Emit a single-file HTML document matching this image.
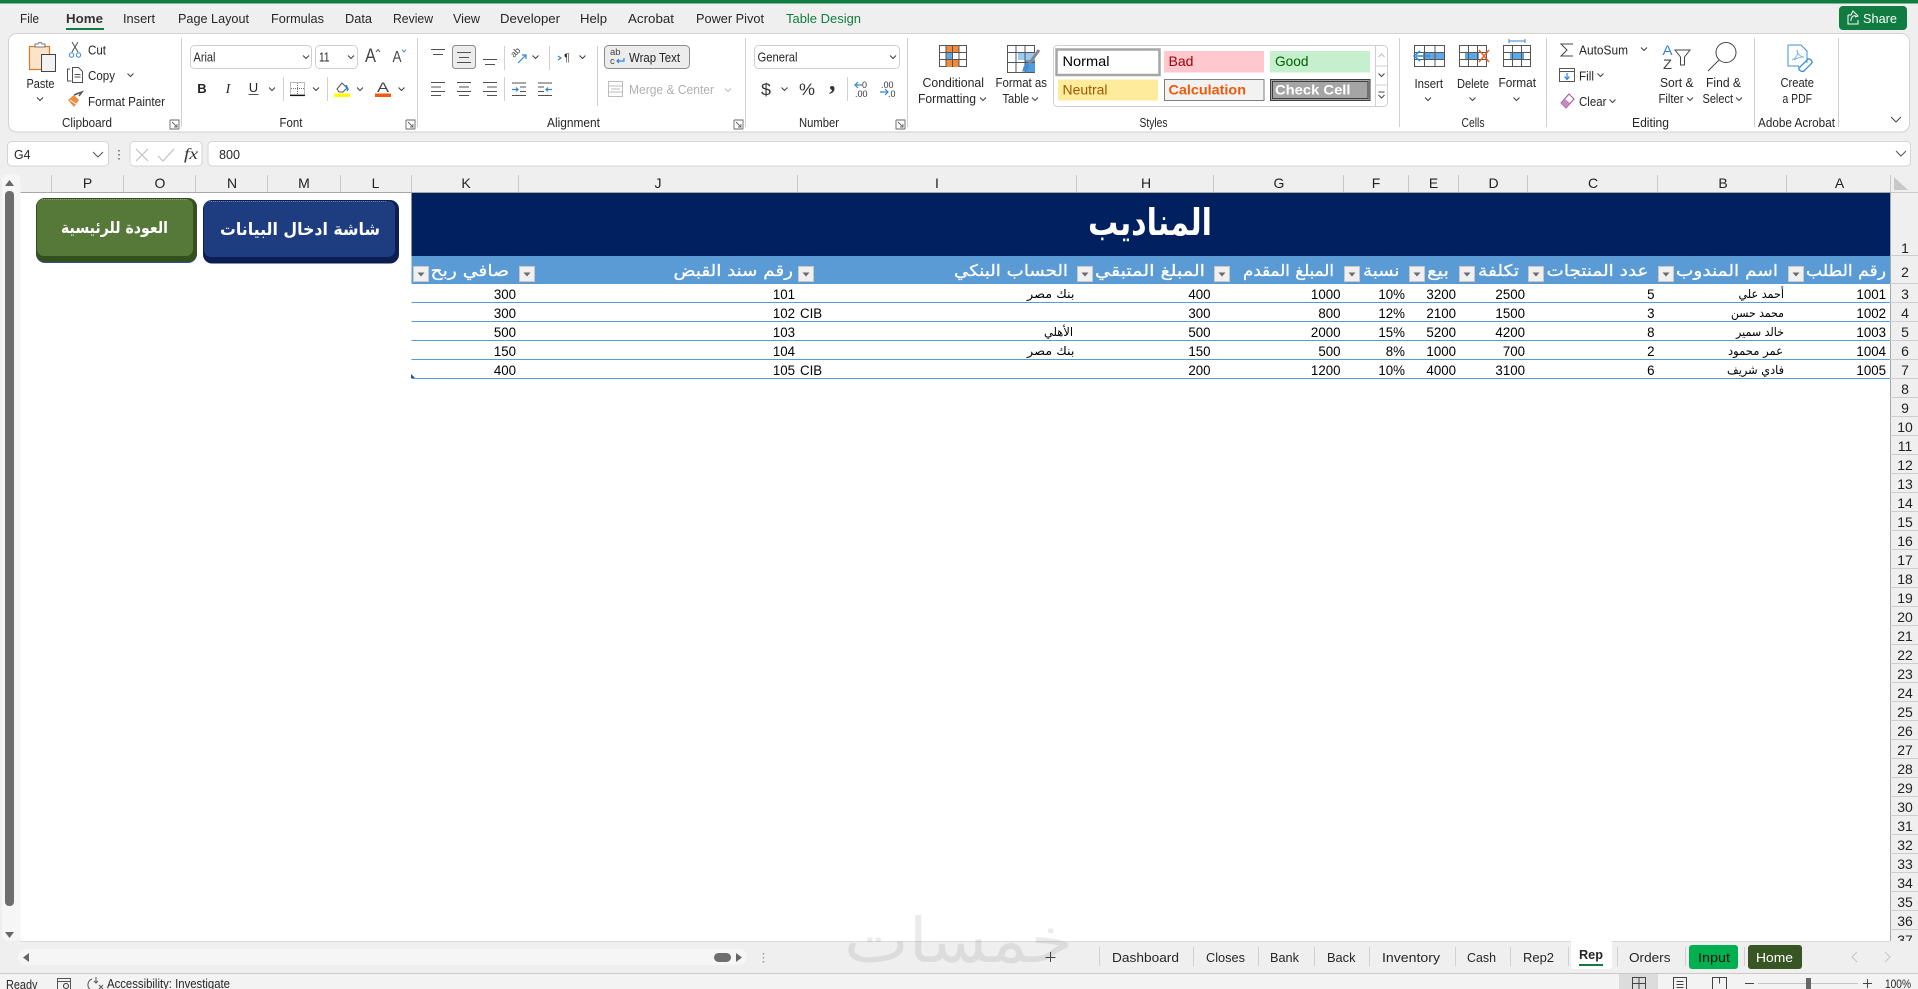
<!DOCTYPE html>
<html lang="en"><head><meta charset="utf-8"><title>Excel</title>
<style>
html,body{margin:0;padding:0;background:#efefef;width:1918px;height:989px;overflow:hidden}
svg{display:block}
text{font-family:"Liberation Sans","DejaVu Sans",sans-serif;fill:#262626;font-size:12.5px}
.t{font-size:13px}
.c{font-size:14px;fill:#000}
.h{font-size:14px;fill:#222;text-anchor:middle}
.a{font-family:"DejaVu Sans",sans-serif}
.hd{font-family:"DejaVu Sans",sans-serif;font-size:16px;fill:#fff;stroke:#fff;stroke-width:.25}
.n{font-family:"DejaVu Sans",sans-serif;font-size:12px;fill:#000}
.i{fill:none;stroke:#505050;stroke-width:1}
.b{fill:none;stroke:#2f86d8;stroke-width:1.2}
.sep{stroke:#d0d0d0;stroke-width:1}
</style></head><body>
<svg width="1918" height="989" viewBox="0 0 1918 989" xmlns="http://www.w3.org/2000/svg">
<defs>
<path id="ch" d="M-3 -1.5L0 1.5L3 -1.5" fill="none" stroke="#444" stroke-width="1.1"/>
<g id="fb"><rect x=".5" y=".5" width="15" height="15" fill="#f0f0f0" stroke="#c8c8c8"/><path d="M4.5 6.500h7l-3.500 4z" fill="#6a6a6a"/></g>
<path id="dl" d="M0 0h9v9M0 0v9h9M2 2l5 5M7 4v3H4" fill="none" stroke="#666" stroke-width=".9"/>
</defs>
<rect width="1918" height="989" fill="#efefef"/>
<rect width="1918" height="3.5" fill="#107c41"/>

<!-- menu tabs -->
<g class="menu">
<text class="t" x="20" y="23" textLength="19" lengthAdjust="spacingAndGlyphs">File</text>
<text class="t" x="66" y="23" textLength="37" lengthAdjust="spacingAndGlyphs" style="font-weight:700;stroke:none;fill:#333">Home</text>
<text class="t" x="123" y="23" textLength="32" lengthAdjust="spacingAndGlyphs">Insert</text>
<text class="t" x="178" y="23" textLength="71" lengthAdjust="spacingAndGlyphs">Page Layout</text>
<text class="t" x="271" y="23" textLength="53" lengthAdjust="spacingAndGlyphs">Formulas</text>
<text class="t" x="345" y="23" textLength="27" lengthAdjust="spacingAndGlyphs">Data</text>
<text class="t" x="393" y="23" textLength="40" lengthAdjust="spacingAndGlyphs">Review</text>
<text class="t" x="453" y="23" textLength="27" lengthAdjust="spacingAndGlyphs">View</text>
<text class="t" x="500" y="23" textLength="60" lengthAdjust="spacingAndGlyphs">Developer</text>
<text class="t" x="580" y="23" textLength="27" lengthAdjust="spacingAndGlyphs">Help</text>
<text class="t" x="628" y="23" textLength="46" lengthAdjust="spacingAndGlyphs">Acrobat</text>
<text class="t" x="696" y="23" textLength="68" lengthAdjust="spacingAndGlyphs">Power Pivot</text>
<text class="t" x="786" y="23" textLength="75" lengthAdjust="spacingAndGlyphs" style="fill:#107c41">Table Design</text>
</g>
<rect x="66" y="28" width="38" height="2" fill="#107c41"/>
<rect x="1839" y="6" width="68" height="24" rx="4" fill="#107c41"/>
<path d="M1848 15h3l2-4 5 5-3 1M1848 15v9h10v-4M1851 21c0-4 2-6 5-5" fill="none" stroke="#fff"/>
<text class="t" x="1863" y="23" textLength="34" lengthAdjust="spacingAndGlyphs" style="fill:#fff">Share</text>

<!-- ribbon -->
<rect x="8.5" y="33.5" width="1901" height="98.5" rx="8" fill="#fff" stroke="#d2d2d2"/>
<g class="sep"><path d="M181.5 38v89M417.5 38v89M745.5 38v89M907.5 38v89M1399.5 38v89M1546.5 38v89M1754.5 38v89M1838.5 38v89M597.5 46v60M283.5 77v24M327.5 77v24M504.5 46v24M504.5 77v24M549.5 46v24M847.5 77v24" fill="none"/></g>
<!-- group labels -->
<text x="62" y="127" textLength="50" lengthAdjust="spacingAndGlyphs">Clipboard</text>
<text x="279.5" y="127" textLength="23" lengthAdjust="spacingAndGlyphs">Font</text>
<text x="547" y="127" textLength="53" lengthAdjust="spacingAndGlyphs">Alignment</text>
<text x="799" y="127" textLength="40" lengthAdjust="spacingAndGlyphs">Number</text>
<text x="1139.5" y="127" textLength="28" lengthAdjust="spacingAndGlyphs">Styles</text>
<text x="1461.5" y="127" textLength="23" lengthAdjust="spacingAndGlyphs">Cells</text>
<text x="1632" y="127" textLength="37" lengthAdjust="spacingAndGlyphs">Editing</text>
<text x="1758" y="127" textLength="77" lengthAdjust="spacingAndGlyphs">Adobe Acrobat</text>
<use href="#dl" x="170" y="120"/><use href="#dl" x="406" y="120"/><use href="#dl" x="734" y="120"/><use href="#dl" x="896" y="120"/>

<!-- clipboard -->
<rect x="29.5" y="46.5" width="20" height="23" fill="#fde4c8" stroke="#d9772b" stroke-width="1.2"/>
<path d="M35 46v-2h3l1-1.5h2l1 1.5h3v3h-10z" fill="#fff" stroke="#777"/>
<rect x="41.5" y="54.5" width="14" height="17" fill="#f2f2f2" stroke="#444"/>
<text x="26.5" y="88" textLength="28" lengthAdjust="spacingAndGlyphs">Paste</text>
<use href="#ch" x="40" y="99"/>
<path d="M72 42l6 10M78 42l-6 10" class="i" stroke="#555"/><circle cx="71.5" cy="55" r="2.2" fill="none" stroke="#2f86d8"/><circle cx="78.5" cy="55" r="2.2" fill="none" stroke="#2f86d8"/>
<text x="88" y="54.5" textLength="18" lengthAdjust="spacingAndGlyphs">Cut</text>
<path d="M70 69h-2.500v12h4M72.500 67.500h6l4 4v11h-10z" class="i"/><path d="M74.500 74.500h6M74.500 77h6" class="i"/>
<text x="88" y="80" textLength="27" lengthAdjust="spacingAndGlyphs">Copy</text>
<use href="#ch" x="130.500" y="75"/>
<path d="M68 100l6-5 5 5-5 7z" fill="#f08a3c"/><path d="M74 95l5-2 3-1-3 4" fill="none" stroke="#555" stroke-width="1.500"/><path d="M70 100l6 4" stroke="#fff"/>
<text x="88" y="106" textLength="77" lengthAdjust="spacingAndGlyphs">Format Painter</text>

<!-- font -->
<rect x="190.500" y="45.500" width="121" height="23" rx="4" fill="#fff" stroke="#cfcfcf"/>
<text x="193.500" y="61.500" textLength="22" lengthAdjust="spacingAndGlyphs">Arial</text>
<use href="#ch" x="306" y="57"/>
<rect x="315.500" y="45.500" width="42" height="23" rx="4" fill="#fff" stroke="#cfcfcf"/>
<text x="319" y="61.500" textLength="10.500" lengthAdjust="spacingAndGlyphs">11</text>
<use href="#ch" x="351" y="57"/>
<text x="365" y="62" style="font-size:19px;fill:#444" textLength="11" lengthAdjust="spacingAndGlyphs">A</text><path d="M376 52l2-2.500 2 2.500" class="i"/>
<text x="392.500" y="62" style="font-size:16px;fill:#444" textLength="9" lengthAdjust="spacingAndGlyphs">A</text><path d="M402 49.500l2 2.500 2-2.500" fill="none" stroke="#2f86d8"/>
<text x="202" y="93" text-anchor="middle" style="font-weight:700;font-size:13px">B</text>
<text x="228" y="93" text-anchor="middle" style="font-style:italic;font-family:'Liberation Serif',serif;font-size:14px">I</text>
<text x="253.500" y="92" text-anchor="middle" style="font-size:13px">U</text><path d="M248.500 94.500h10" class="i"/>
<use href="#ch" x="272" y="89"/>
<rect x="290.500" y="82.500" width="14" height="12" fill="none" stroke="#777" stroke-dasharray="1 1"/><path d="M297.500 83v12M291 88.500h14" stroke="#777" stroke-dasharray="1 1"/><path d="M290 95.500h15" stroke="#111" stroke-width="1.200"/>
<use href="#ch" x="316" y="89"/>
<path d="M337 89l5-6 5 5-4 4h-4z" fill="none" stroke="#555"/><path d="M346 85l2 4-1 2" fill="none" stroke="#2f86d8" stroke-width="1.500"/><rect x="334" y="93.500" width="16" height="3.500" fill="#ffff00"/>
<use href="#ch" x="360" y="89"/>
<text x="377" y="92" style="font-size:14px;fill:#444" textLength="12" lengthAdjust="spacingAndGlyphs">A</text><rect x="375" y="93.500" width="16" height="3.500" fill="#f05a12"/>
<use href="#ch" x="401.500" y="89"/>

<!-- alignment -->
<path d="M431 49.500h14M433 54.500h10" class="i"/>
<rect x="452.500" y="45.500" width="23" height="23" rx="3" fill="#ececec" stroke="#8c8c8c"/>
<path d="M457 52.500h14M459 57.500h10M457 62.500h14" class="i"/>
<path d="M483 59.500h14M485 64.500h10" class="i"/>
<text x="514" y="58" style="font-size:9px;fill:#444" transform="rotate(-45 514 58)">ab</text><path d="M518 63l8-8M522 55h4v4" class="b"/>
<use href="#ch" x="535.500" y="57"/>
<path d="M558 56l3 2-3 2" class="b"/><text x="564" y="61" style="font-size:11px;fill:#333">¶</text>
<use href="#ch" x="582.500" y="57"/>
<rect x="604.500" y="45.500" width="85" height="23" rx="4" fill="#ececec" stroke="#8c8c8c"/>
<text x="610" y="55" style="font-size:9.500px;fill:#444">ab</text><text x="610" y="64" style="font-size:9.500px;fill:#444">c</text><path d="M624 58v3h-7M619 59l-2 2 2 2" class="b"/>
<text x="629" y="62" textLength="51" lengthAdjust="spacingAndGlyphs">Wrap Text</text>
<path d="M431 82.500h14M431 87h10M431 91.500h14M431 95.500h10" class="i"/>
<path d="M457 82.500h14M459 87h10M457 91.500h14M459 95.500h10" class="i"/>
<path d="M483 82.500h14M487 87h10M483 91.500h14M487 95.500h10" class="i"/>
<path d="M512 83h14M520 87h6M520 91.500h6M512 95.500h14" class="i"/><path d="M512 89.500h6M516 87.500l2 2-2 2" class="b"/>
<path d="M538 83h14M538 87h6M538 91.500h6M538 95.500h14" class="i"/><path d="M546 89.500h6M548 87.500l-2 2 2 2" class="b"/>
<rect x="608.500" y="81.500" width="14" height="15" fill="none" stroke="#bdbdbd"/><path d="M609 86h13M609 92h13M611 89h9" stroke="#bdbdbd"/>
<text x="629" y="94" textLength="85" lengthAdjust="spacingAndGlyphs" style="fill:#b0b0b0">Merge &amp; Center</text>
<path d="M725 88.500l3 3 3-3" fill="none" stroke="#bbb"/>

<!-- number -->
<rect x="754.500" y="45.500" width="145" height="23" rx="4" fill="#fff" stroke="#cfcfcf"/>
<text x="757.500" y="61.500" textLength="40" lengthAdjust="spacingAndGlyphs">General</text>
<use href="#ch" x="893" y="57"/>
<text x="761" y="95" style="font-size:17px;fill:#333" textLength="10" lengthAdjust="spacingAndGlyphs">$</text>
<use href="#ch" x="784.500" y="89"/>
<text x="799" y="95" style="font-size:17px;fill:#333" textLength="16" lengthAdjust="spacingAndGlyphs">%</text>
<text x="829" y="90" style="font-size:26px;font-weight:700;fill:#333;font-family:'Liberation Serif',serif">,</text>
<path d="M862 85h-7M858 82l-3 3 3 3" class="b"/><text x="862" y="88" style="font-size:9px;fill:#333">0</text><text x="855" y="97" style="font-size:9px;fill:#333">.00</text>
<text x="881" y="88" style="font-size:9px;fill:#333">.00</text><path d="M880 92h8M885 89l3 3-3 3" class="b"/><text x="888" y="97" style="font-size:9px;fill:#333">.0</text>

<!-- conditional formatting / format as table -->
<rect x="939.500" y="45.500" width="27" height="21" fill="#fff" stroke="#555"/>
<rect x="946" y="46" width="13" height="7" fill="#f28a3a"/><rect x="946" y="53" width="6.500" height="7" fill="#5ea8e6"/><rect x="946" y="60" width="13" height="7" fill="#f28a3a"/>
<path d="M946 45v22M952.500 45v22M959 45v22M939.500 52.500h27M939.500 59.500h27" fill="none" stroke="#555"/>
<text x="922.500" y="87" textLength="61.500" lengthAdjust="spacingAndGlyphs">Conditional</text>
<text x="918" y="103" textLength="58" lengthAdjust="spacingAndGlyphs">Formatting</text><use href="#ch" x="983" y="99"/>
<rect x="1007.500" y="45.500" width="27" height="27" fill="#fff" stroke="#555"/>
<rect x="1018" y="52" width="17" height="8" fill="#9cc9ef"/><rect x="1025" y="60" width="10" height="12" fill="#4f9de0"/>
<path d="M1016 45v27M1025 45v27M1008 52.500h27M1008 62.500h27" fill="none" stroke="#555"/>
<path d="M1039 50l-10 14" stroke="#888" stroke-width="3"/><path d="M1027 64c3 1 3 4 0 6l-5 2c1-2 1-5 2-6z" fill="#3d8fd6"/>
<text x="995.500" y="87" textLength="51.500" lengthAdjust="spacingAndGlyphs">Format as</text>
<text x="1002.500" y="103" textLength="26.500" lengthAdjust="spacingAndGlyphs">Table</text><use href="#ch" x="1035" y="99"/>

<!-- styles gallery -->
<rect x="1053.500" y="45.500" width="334" height="61" rx="4" fill="#fff" stroke="#cfcfcf"/>
<path d="M1375.500 45.500v61M1375.500 66h12M1375.500 85h12" stroke="#cfcfcf" fill="none"/>
<path d="M1378.500 57l3-3 3 3" fill="none" stroke="#bbb"/><use href="#ch" x="1381.500" y="75"/><path d="M1378.500 92h6M1378.500 95l3 3 3-3" fill="none" stroke="#444"/>
<rect x="1056.500" y="49.500" width="103" height="25.500" fill="#fff" stroke="#a6a6a6" stroke-width="2.500"/>
<text x="1062.500" y="66" style="font-size:14px;fill:#000" textLength="47" lengthAdjust="spacingAndGlyphs">Normal</text>
<rect x="1164" y="51" width="100" height="21.500" fill="#ffc7ce"/>
<text x="1168.500" y="66" style="font-size:14px;fill:#9c0006" textLength="25" lengthAdjust="spacingAndGlyphs">Bad</text>
<rect x="1270" y="51" width="100" height="21.500" fill="#c6efce"/>
<text x="1275" y="66" style="font-size:14px;fill:#006100" textLength="33.500" lengthAdjust="spacingAndGlyphs">Good</text>
<rect x="1058" y="79.500" width="100" height="21" fill="#ffeb9c"/>
<text x="1062.500" y="94.500" style="font-size:14px;fill:#9c5700" textLength="45" lengthAdjust="spacingAndGlyphs">Neutral</text>
<rect x="1164.500" y="79.500" width="99.500" height="21" fill="#f2f2f2" stroke="#7f7f7f"/>
<text x="1168.500" y="94.500" style="font-size:14px;font-weight:700;fill:#ee5a0a" textLength="77.500" lengthAdjust="spacingAndGlyphs">Calculation</text>
<rect x="1270.500" y="79.500" width="99.500" height="21" fill="#a5a5a5" stroke="#3f3f3f"/><rect x="1272.500" y="81.500" width="95.500" height="17" fill="none" stroke="#3f3f3f"/>
<text x="1275" y="94.500" style="font-size:14px;font-weight:700;fill:#fff" textLength="75.500" lengthAdjust="spacingAndGlyphs">Check Cell</text>

<!-- cells -->
<rect x="1414.500" y="45.500" width="30" height="21" fill="#fff" stroke="#555"/><rect x="1423" y="52" width="21" height="8" fill="#5ea8e6"/>
<path d="M1424.500 45.500v21M1435 45.500v21M1414.500 52.500h30M1414.500 59.500h30" stroke="#555" fill="none"/><path d="M1430 56h-14M1420 51l-6 5 6 5" fill="none" stroke="#2f86d8" stroke-width="1.500"/>
<text x="1414.500" y="88" textLength="28.500" lengthAdjust="spacingAndGlyphs">Insert</text><use href="#ch" x="1428" y="99"/>
<rect x="1459.500" y="45.500" width="27" height="21" fill="#fff" stroke="#555"/><rect x="1465" y="52" width="14" height="8" fill="#5ea8e6"/>
<path d="M1468.500 45.500v21M1477.500 45.500v21M1459.500 52.500h27M1459.500 59.500h27" stroke="#555" fill="none"/><path d="M1479 50l10 12M1489 50l-10 12" stroke="#ee5a24" stroke-width="1.400" fill="none"/>
<text x="1457" y="88" textLength="32" lengthAdjust="spacingAndGlyphs">Delete</text><use href="#ch" x="1472.500" y="99"/>
<rect x="1503.500" y="45.500" width="27" height="21" fill="#fff" stroke="#555"/><rect x="1510" y="52" width="14" height="8" fill="#5ea8e6"/>
<path d="M1512.500 45.500v21M1521.500 45.500v21M1503.500 52.500h27M1503.500 59.500h27" stroke="#555" fill="none"/><path d="M1509 41h16M1509 39v4M1525 39v4" stroke="#2f86d8" fill="none"/>
<text x="1498.500" y="87" textLength="37.500" lengthAdjust="spacingAndGlyphs">Format</text><use href="#ch" x="1516.500" y="99"/>

<!-- editing -->
<path d="M1573 44h-12l6 6-6 6h12" fill="none" stroke="#444"/>
<text x="1579" y="54.500" textLength="49" lengthAdjust="spacingAndGlyphs">AutoSum</text><use href="#ch" x="1644" y="49"/>
<rect x="1559.500" y="68.500" width="15" height="13" fill="none" stroke="#555"/><path d="M1560 71.500h14" stroke="#555"/><path d="M1567 73v6M1564.500 76.500l2.500 3 2.500-3" class="b"/>
<text x="1579" y="80.500" textLength="15" lengthAdjust="spacingAndGlyphs">Fill</text><use href="#ch" x="1600.500" y="75"/>
<path d="M1561 103l8-9 5 5-8 9z" fill="#fff" stroke="#a54ca0"/><path d="M1561 103l4-4 5 4-4 5z" fill="#c58ac2"/>
<text x="1579" y="106" textLength="27.500" lengthAdjust="spacingAndGlyphs">Clear</text><use href="#ch" x="1612.500" y="101"/>
<text x="1662.500" y="55" style="font-size:14px;fill:#2f86d8" textLength="10" lengthAdjust="spacingAndGlyphs">A</text>
<text x="1663" y="69" style="font-size:14px;fill:#444" textLength="9" lengthAdjust="spacingAndGlyphs">Z</text>
<path d="M1675 50h15l-5.500 7v8h-4v-8z" fill="none" stroke="#444"/>
<text x="1660" y="87" textLength="33.500" lengthAdjust="spacingAndGlyphs">Sort &amp;</text>
<text x="1658.500" y="103" textLength="25" lengthAdjust="spacingAndGlyphs">Filter</text><use href="#ch" x="1690" y="99"/>
<circle cx="1726" cy="52.500" r="10" fill="#fff" stroke="#444"/><path d="M1719 60l-11 11" stroke="#444"/>
<text x="1706" y="87" textLength="35" lengthAdjust="spacingAndGlyphs">Find &amp;</text>
<text x="1702.500" y="103" textLength="30.500" lengthAdjust="spacingAndGlyphs">Select</text><use href="#ch" x="1739" y="99"/>

<!-- acrobat -->
<path d="M1788 45h13l6 6v12M1788 45v21h11" fill="none" stroke="#3d8fd6"/><path d="M1792 60c4-2 7-6 5-10 0 4 4 7 7 7-3 0-7 1-10 3" fill="none" stroke="#7fb3e6"/>
<path d="M1800 67l8-8a3.500 3.500 0 0 1 4 4l-8 8a3.500 3.500 0 0 1-5-4z" fill="none" stroke="#3d8fd6" stroke-width="1.300"/>
<text x="1780.500" y="87" textLength="33.500" lengthAdjust="spacingAndGlyphs">Create</text>
<text x="1782.500" y="103" textLength="29.500" lengthAdjust="spacingAndGlyphs">a PDF</text>
<path d="M1891 117l5 5 5-5" fill="none" stroke="#444"/>

<!-- formula bar -->
<rect x="7.500" y="141.500" width="101" height="24.500" rx="4" fill="#fff" stroke="#d4d4d4"/>
<text x="14" y="159" style="font-size:13px" textLength="16.500" lengthAdjust="spacingAndGlyphs">G4</text>
<path d="M93 152l5 5 5-5" fill="none" stroke="#555"/>
<path d="M119 150v1.500M119 154v1.500M119 158v1.500" stroke="#888" stroke-width="2"/>
<rect x="130" y="141.500" width="72" height="24.500" rx="4" fill="#fff" stroke="#d4d4d4"/>
<path d="M136 149l12 12M148 149l-12 12M158 156l5 5 11-12" fill="none" stroke="#c2c2c2" stroke-width="1.200"/>
<text x="184" y="159" style="font-family:'Liberation Serif',serif;font-style:italic;font-size:15.500px;fill:#333" textLength="14" lengthAdjust="spacingAndGlyphs">fx</text>
<rect x="208" y="141.500" width="1702.500" height="24.500" rx="4" fill="#fff" stroke="#d4d4d4"/>
<text x="219" y="159" style="font-size:13px" textLength="21" lengthAdjust="spacingAndGlyphs">800</text>
<path d="M1896 151l5 5 5-5" fill="none" stroke="#555"/>

<!-- sheet -->
<rect x="20.500" y="174" width="1898" height="767" fill="#fff"/>
<rect x="20.500" y="174" width="1898" height="18.700" fill="#efefef"/>
<path d="M20.500 192.500H1918" stroke="#a8a8a8"/>
<g stroke="#c8c8c8"><path d="M51.500 175v17M123.500 175v17M195.500 175v17M267.500 175v17M340.500 175v17M411.500 175v17M518.500 175v17M797.500 175v17M1076.500 175v17M1213.500 175v17M1343.500 175v17M1408.500 175v17M1458.500 175v17M1527.500 175v17M1657.500 175v17M1786.500 175v17M1890.500 175v17" fill="none"/></g>
<path d="M1894 190h14l-14-13z" fill="#c8c8c8"/>
<g>
<text class="h" x="87.500" y="188">P</text><text class="h" x="160" y="188">O</text><text class="h" x="232" y="188">N</text><text class="h" x="304" y="188">M</text><text class="h" x="375.500" y="188">L</text><text class="h" x="466" y="188">K</text><text class="h" x="658" y="188">J</text><text class="h" x="937" y="188">I</text><text class="h" x="1146" y="188">H</text><text class="h" x="1279" y="188">G</text><text class="h" x="1376" y="188">F</text><text class="h" x="1433.500" y="188">E</text><text class="h" x="1493.500" y="188">D</text><text class="h" x="1593" y="188">C</text><text class="h" x="1723" y="188">B</text><text class="h" x="1839.500" y="188">A</text>
</g>

<!-- row header -->
<rect x="1890" y="192.500" width="28" height="749" fill="#efefef"/>
<path d="M1890.500 192.500V941" stroke="#a8a8a8"/>
<g stroke="#cdcdcd"><path d="M1890 255.500h28M1890 283.500h28M1890 302.500h28M1890 321.500h28M1890 340.500h28M1890 359.500h28M1890 378.500h28M1890 397.500h28M1890 416.500h28M1890 435.500h28M1890 454.500h28M1890 473.500h28M1890 492.500h28M1890 511.500h28M1890 530.500h28M1890 549.500h28M1890 568.500h28M1890 587.500h28M1890 606.500h28M1890 625.500h28M1890 644.500h28M1890 663.500h28M1890 682.500h28M1890 701.500h28M1890 720.500h28M1890 739.500h28M1890 758.500h28M1890 777.500h28M1890 796.500h28M1890 815.500h28M1890 834.500h28M1890 853.500h28M1890 872.500h28M1890 891.500h28M1890 910.500h28M1890 929.500h28" fill="none"/></g>
<g>
<text class="h" x="1905" y="253">1</text><text class="h" x="1905" y="277">2</text><text class="h" x="1905" y="299">3</text><text class="h" x="1905" y="318">4</text><text class="h" x="1905" y="337">5</text><text class="h" x="1905" y="356">6</text><text class="h" x="1905" y="375">7</text><text class="h" x="1905" y="394">8</text><text class="h" x="1905" y="413">9</text><text class="h" x="1905" y="432">10</text><text class="h" x="1905" y="451">11</text><text class="h" x="1905" y="470">12</text><text class="h" x="1905" y="489">13</text><text class="h" x="1905" y="508">14</text><text class="h" x="1905" y="527">15</text><text class="h" x="1905" y="546">16</text><text class="h" x="1905" y="565">17</text><text class="h" x="1905" y="584">18</text><text class="h" x="1905" y="603">19</text><text class="h" x="1905" y="622">20</text><text class="h" x="1905" y="641">21</text><text class="h" x="1905" y="660">22</text><text class="h" x="1905" y="679">23</text><text class="h" x="1905" y="698">24</text><text class="h" x="1905" y="717">25</text><text class="h" x="1905" y="736">26</text><text class="h" x="1905" y="755">27</text><text class="h" x="1905" y="774">28</text><text class="h" x="1905" y="793">29</text><text class="h" x="1905" y="812">30</text><text class="h" x="1905" y="831">31</text><text class="h" x="1905" y="850">32</text><text class="h" x="1905" y="869">33</text><text class="h" x="1905" y="888">34</text><text class="h" x="1905" y="907">35</text><text class="h" x="1905" y="926">36</text><text class="h" x="1905" y="945">37</text>
</g>

<!-- title + header -->
<rect x="411.500" y="193" width="1478.500" height="63" fill="#002060"/>
<rect x="411.500" y="256" width="1478.500" height="28" fill="#5b9bd5"/>
<text class="a" x="1088" y="235" textLength="124" lengthAdjust="spacingAndGlyphs" style="font-size:37px;font-weight:700;fill:#fff">المناديب</text>

<text class="hd" x="1806" y="276" textLength="80" lengthAdjust="spacingAndGlyphs">رقم الطلب</text>
<text class="hd" x="1676" y="276" textLength="102" lengthAdjust="spacingAndGlyphs">اسم المندوب</text>
<text class="hd" x="1546.500" y="276" textLength="102" lengthAdjust="spacingAndGlyphs">عدد المنتجات</text>
<text class="hd" x="1478" y="276" textLength="41" lengthAdjust="spacingAndGlyphs">تكلفة</text>
<text class="hd" x="1427" y="276" textLength="22" lengthAdjust="spacingAndGlyphs">بيع</text>
<text class="hd" x="1363" y="276" textLength="36.500" lengthAdjust="spacingAndGlyphs">نسبة</text>
<text class="hd" x="1243" y="276" textLength="91" lengthAdjust="spacingAndGlyphs">المبلغ المقدم</text>
<text class="hd" x="1095" y="276" textLength="110" lengthAdjust="spacingAndGlyphs">المبلغ المتبقي</text>
<text class="hd" x="954" y="276" textLength="114" lengthAdjust="spacingAndGlyphs">الحساب البنكي</text>
<text class="hd" x="673.500" y="276" textLength="119.500" lengthAdjust="spacingAndGlyphs">رقم سند القبض</text>
<text class="hd" x="430.500" y="276" textLength="78.500" lengthAdjust="spacingAndGlyphs">صافي ربح</text>
<use href="#fb" x="1788" y="266"/><use href="#fb" x="1658" y="266"/><use href="#fb" x="1528" y="266"/><use href="#fb" x="1459" y="266"/><use href="#fb" x="1409" y="266"/><use href="#fb" x="1344" y="266"/><use href="#fb" x="1214" y="266"/><use href="#fb" x="1077" y="266"/><use href="#fb" x="798" y="266"/><use href="#fb" x="519" y="266"/><use href="#fb" x="413" y="266"/>

<!-- table borders -->
<g stroke="#5b9bd5" fill="none"><path d="M411.500 302.500H1890M411.500 321.500H1890M411.500 340.500H1890M411.500 359.500H1890M411.500 378.500H1890"/></g>
<path d="M411 374l4 4h-4z" fill="#1f4e9c"/>

<!-- data -->
<g text-anchor="end">
<g transform="translate(1886 0) scale(.95 1)"><text class="c" y="299">1001</text><text class="c" y="318">1002</text><text class="c" y="337">1003</text><text class="c" y="356">1004</text><text class="c" y="375">1005</text></g>
<g transform="translate(1654.500 0) scale(.95 1)"><text class="c" y="299">5</text><text class="c" y="318">3</text><text class="c" y="337">8</text><text class="c" y="356">2</text><text class="c" y="375">6</text></g>
<g transform="translate(1525 0) scale(.95 1)"><text class="c" y="299">2500</text><text class="c" y="318">1500</text><text class="c" y="337">4200</text><text class="c" y="356">700</text><text class="c" y="375">3100</text></g>
<g transform="translate(1456 0) scale(.95 1)"><text class="c" y="299">3200</text><text class="c" y="318">2100</text><text class="c" y="337">5200</text><text class="c" y="356">1000</text><text class="c" y="375">4000</text></g>
<g transform="translate(1405 0) scale(.95 1)"><text class="c" y="299">10%</text><text class="c" y="318">12%</text><text class="c" y="337">15%</text><text class="c" y="356">8%</text><text class="c" y="375">10%</text></g>
<g transform="translate(1340.500 0) scale(.95 1)"><text class="c" y="299">1000</text><text class="c" y="318">800</text><text class="c" y="337">2000</text><text class="c" y="356">500</text><text class="c" y="375">1200</text></g>
<g transform="translate(1210.500 0) scale(.95 1)"><text class="c" y="299">400</text><text class="c" y="318">300</text><text class="c" y="337">500</text><text class="c" y="356">150</text><text class="c" y="375">200</text></g>
<g transform="translate(795 0) scale(.95 1)"><text class="c" y="299">101</text><text class="c" y="318">102</text><text class="c" y="337">103</text><text class="c" y="356">104</text><text class="c" y="375">105</text></g>
<g transform="translate(516 0) scale(.95 1)"><text class="c" y="299">300</text><text class="c" y="318">300</text><text class="c" y="337">500</text><text class="c" y="356">150</text><text class="c" y="375">400</text></g>
</g>
<g transform="translate(800 0) scale(.95 1)"><text class="c" y="318">CIB</text><text class="c" y="375">CIB</text></g>
<text class="n" x="1738.500" y="298" textLength="45.500" lengthAdjust="spacingAndGlyphs">أحمد علي</text>
<text class="n" x="1731" y="317" textLength="53" lengthAdjust="spacingAndGlyphs">محمد حسن</text>
<text class="n" x="1736" y="336" textLength="48" lengthAdjust="spacingAndGlyphs">خالد سمير</text>
<text class="n" x="1728" y="355" textLength="55" lengthAdjust="spacingAndGlyphs">عمر محمود</text>
<text class="n" x="1727" y="374" textLength="57" lengthAdjust="spacingAndGlyphs">فادي شريف</text>
<text class="n" x="1027" y="298" textLength="47.500" lengthAdjust="spacingAndGlyphs">بنك مصر</text>
<text class="n" x="1044" y="336" textLength="29" lengthAdjust="spacingAndGlyphs">الأهلي</text>
<text class="n" x="1027" y="355" textLength="47.500" lengthAdjust="spacingAndGlyphs">بنك مصر</text>

<!-- buttons -->
<rect x="36" y="198" width="161" height="65" rx="9" fill="#344f8c"/>
<rect x="36" y="198" width="161" height="64" rx="9" fill="#35501f"/>
<rect x="37" y="199" width="156" height="57" rx="7" fill="#567839"/>
<path d="M42 199.500h145" stroke="#8fa77b" stroke-dasharray="1 1"/>
<text class="a" x="61" y="233" textLength="107" lengthAdjust="spacingAndGlyphs" style="font-size:16px;font-weight:700;fill:#fff">العودة للرئيسية</text>
<rect x="203" y="200" width="196" height="63.500" rx="9" fill="#0d1f52"/>
<rect x="204" y="201" width="191" height="56" rx="7" fill="#1d3d80"/>
<path d="M209 201.500h178" stroke="#6c83b3" stroke-dasharray="1 1"/>
<text class="a" x="220" y="235" textLength="160" lengthAdjust="spacingAndGlyphs" style="font-size:17px;font-weight:700;fill:#fff">شاشة ادخال البيانات</text>

<!-- vertical scrollbar -->
<rect x="2" y="174" width="18.500" height="767" rx="6" fill="#f6f6f6"/>
<path d="M5 186l4.500-6 4.500 6z" fill="#666"/>
<rect x="5" y="191" width="9" height="715" rx="4" fill="#6e6e6e"/>
<path d="M5 932h9l-4.500 6z" fill="#666"/>

<!-- tab bar -->
<rect x="0" y="941" width="1918" height="32" fill="#efefef"/>
<path d="M20 941.500h1870" stroke="#dadada"/>
<rect x="18" y="949" width="729" height="16" rx="8" fill="#f6f6f6"/>
<path d="M29 953v9l-6-4.500z" fill="#666"/>
<rect x="714" y="953" width="17" height="9" rx="4.500" fill="#6e6e6e"/>
<path d="M736 953v9l6-4.500z" fill="#666"/>
<path d="M763.500 953v1.500M763.500 957v1.500M763.500 961v1.500" stroke="#999" stroke-width="1.500"/>
<text class="a" x="844" y="962" textLength="229" lengthAdjust="spacingAndGlyphs" style="font-size:62px;fill:#000;opacity:.075">خمسات</text>
<path d="M1050.500 952v10M1045.500 957.500h10" stroke="#444"/>
<g stroke="#d0d0d0"><path d="M1099.500 947v19M1193.500 947v19M1258.500 947v19M1314.500 947v19M1369.500 947v19M1455.500 947v19M1510.500 947v19M1568.500 947v19M1617.500 947v19M1685.500 947v19M1744.500 947v19" fill="none"/></g>
<text class="t" x="1112" y="962" textLength="67" lengthAdjust="spacingAndGlyphs">Dashboard</text>
<text class="t" x="1206" y="962" textLength="39" lengthAdjust="spacingAndGlyphs">Closes</text>
<text class="t" x="1270" y="962" textLength="29" lengthAdjust="spacingAndGlyphs">Bank</text>
<text class="t" x="1327" y="962" textLength="28.500" lengthAdjust="spacingAndGlyphs">Back</text>
<text class="t" x="1382" y="962" textLength="58" lengthAdjust="spacingAndGlyphs">Inventory</text>
<text class="t" x="1467" y="962" textLength="29" lengthAdjust="spacingAndGlyphs">Cash</text>
<text class="t" x="1523" y="962" textLength="31" lengthAdjust="spacingAndGlyphs">Rep2</text>
<path d="M1571 941h41v25a3 3 0 0 1-3 3h-35a3 3 0 0 1-3-3z" fill="#fff"/>
<text class="t" x="1579" y="959" textLength="24" lengthAdjust="spacingAndGlyphs" style="font-weight:700">Rep</text>
<rect x="1579" y="964" width="24" height="2" fill="#107c41"/>
<text class="t" x="1629" y="962" textLength="41.500" lengthAdjust="spacingAndGlyphs">Orders</text>
<rect x="1689" y="945" width="49" height="24" rx="3" fill="#00b050"/>
<text class="t" x="1698" y="962" textLength="32" lengthAdjust="spacingAndGlyphs" style="fill:#111">Input</text>
<rect x="1748" y="945" width="54" height="24" rx="3" fill="#375623"/>
<text class="t" x="1756" y="962" textLength="37" lengthAdjust="spacingAndGlyphs" style="fill:#fff">Home</text>
<path d="M1857 952l-5 5 5 5M1885 952l5 5-5 5" fill="none" stroke="#c4c4c4"/>

<!-- status bar -->
<rect x="0" y="973" width="1918" height="16" fill="#f3f3f3"/>
<path d="M0 973.500h1918" stroke="#c8c8c8"/>
<text x="6" y="989" textLength="31.500" lengthAdjust="spacingAndGlyphs">Ready</text>
<rect x="57.500" y="978.500" width="13" height="12" fill="none" stroke="#555"/><path d="M58 981.500h12" stroke="#555"/><circle cx="66" cy="986" r="2.500" fill="none" stroke="#333"/>
<path d="M92 979c-5 2-5 8-2 10M96 977v6M94 981l2 2 2-2M99 985l4 4M103 985l-4 4" fill="none" stroke="#555"/>
<text x="107" y="988" textLength="123" lengthAdjust="spacingAndGlyphs">Accessibility: Investigate</text>
<rect x="1619" y="974" width="39" height="15" fill="#dcdcdc"/>
<rect x="1632.500" y="977.500" width="13" height="12" fill="none" stroke="#444"/><path d="M1639 977v12M1632 983.500h14" stroke="#444"/>
<rect x="1673.500" y="977.500" width="13" height="12" fill="none" stroke="#444"/><path d="M1676.500 981.500h7M1676.500 984.500h7M1676.500 987.500h7" stroke="#444"/>
<path d="M1712.500 989v-11.500h14V989M1719.500 977.500v6" fill="none" stroke="#444"/>
<path d="M1745 983.500h9" stroke="#444"/>
<path d="M1758 983.500h100" stroke="#c4c4c4"/>
<rect x="1806" y="978" width="5" height="11" fill="#666"/>
<path d="M1863 983.500h9M1867.500 979v9" stroke="#444"/>
<text x="1885" y="988" textLength="26" lengthAdjust="spacingAndGlyphs" style="font-size:12px">100%</text>
</svg>
</body></html>
